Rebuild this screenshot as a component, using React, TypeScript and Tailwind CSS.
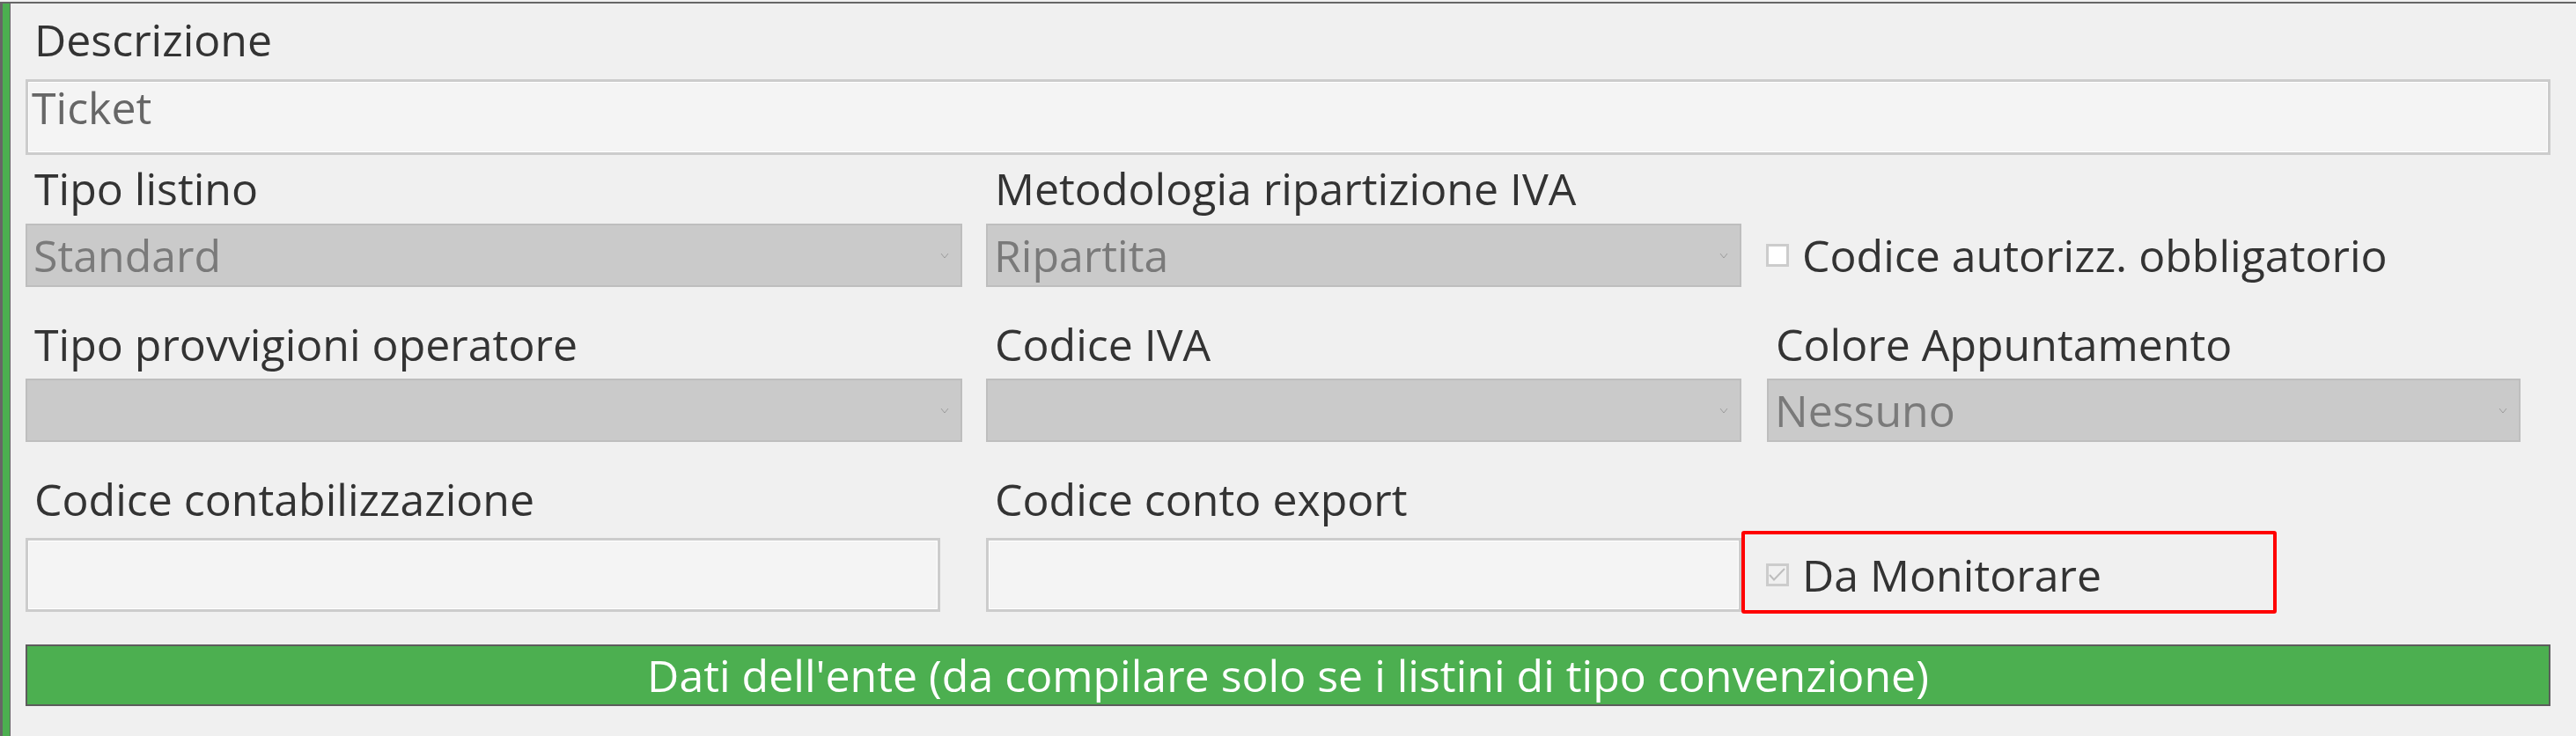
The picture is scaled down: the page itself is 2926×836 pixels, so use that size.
import React from 'react';

const Chevron = () => (
  <svg width="10" height="7" viewBox="0 0 10 7" className="shrink-0">
    <polyline points="1,1 5,6 9,1" fill="none" stroke="#9c9c9c" strokeWidth="1" />
  </svg>
);

const Label = ({ children }: { children?: React.ReactNode }) => (
  <div className="h-[56px] leading-[56px] pl-[10px] text-[#333333] whitespace-nowrap">{children}</div>
);

const Select = ({ value, className = '' }: { value?: string; className?: string }) => (
  <div
    className={`h-[72px] flex items-center justify-between bg-[#cacaca] border-2 border-[#bebebe] pl-[7px] pr-[13px] ${className}`}
  >
    <span className="leading-[56px] text-[#7a7a7a] whitespace-nowrap">{value}</span>
    <Chevron />
  </div>
);

const TextInput = ({ value, className = '' }: { value?: string; className?: string }) => (
  <div
    className={`bg-[#f4f4f4] border-[3px] border-[#cccccc] shadow-[inset_0_0_0_1px_#ffffff] pl-[4px] pt-[1px] ${className}`}
  >
    <span className="block leading-[56px] text-[#666666]">{value}</span>
  </div>
);

const Checkbox = ({ checked }: { checked?: boolean }) => (
  <div
    className={`w-[26px] h-[26px] shrink-0 border-[3px] border-[#cccccc] ${checked ? 'bg-[#f0f0f0]' : 'bg-white'}`}
  >
    {checked && (
      <svg width="20" height="20" viewBox="0 0 20 20">
        <polyline points="1,10 6,15.5 18,3" fill="none" stroke="#bdbdbd" strokeWidth="2" />
      </svg>
    )}
  </div>
);

export default function App() {
  return (
    <div className="w-[2926px] h-[836px] bg-[#f0f0f0] pt-[2px] overflow-hidden font-['Open_Sans',sans-serif] text-[50px]">
      <div className="h-[834px] border-t-2 border-[#666666] flex">
        {/* left edge strip */}
        <div className="w-[3px] bg-[#666666]" />
        <div className="w-[8px] bg-[#4caf50]" />
        <div className="w-[1px] bg-[#666666]" />

        <div className="flex-1 pl-[17px] pr-[29px] pt-[13px]">
          {/* Descrizione */}
          <Label>Descrizione</Label>
          <TextInput value="Ticket" className="mt-[17px] h-[86px]" />

          {/* Row 2 */}
          <div className="flex mt-[10px] gap-[28px]">
            <div className="w-[1064px] flex flex-col gap-[12px]">
              <Label>Tipo listino</Label>
              <Select value="Standard" />
            </div>
            <div className="w-[858px] flex flex-col gap-[12px] -ml-px">
              <Label>Metodologia ripartizione IVA</Label>
              <Select value="Ripartita" />
            </div>
            <div className="w-[856px] flex flex-col gap-[12px] ml-px">
              <div className="h-[56px]" />
              <div className="h-[72px] flex items-center -ml-px">
                <Checkbox />
                <span className="ml-[15px] leading-[56px] text-[#333333] whitespace-nowrap">
                  Codice autorizz. obbligatorio
                </span>
              </div>
            </div>
          </div>

          {/* Row 3 */}
          <div className="flex mt-[37px] gap-[28px]">
            <div className="w-[1064px] flex flex-col gap-[11px]">
              <Label>Tipo provvigioni operatore</Label>
              <Select />
            </div>
            <div className="w-[858px] flex flex-col gap-[11px] -ml-px">
              <Label>Codice IVA</Label>
              <Select />
            </div>
            <div className="w-[856px] flex flex-col gap-[11px] ml-px">
              <Label>Colore Appuntamento</Label>
              <Select value="Nessuno" />
            </div>
          </div>

          {/* Row 4 */}
          <div className="flex mt-[37px] gap-[28px]">
            <div className="w-[1064px] flex flex-col gap-[16px]">
              <Label>Codice contabilizzazione</Label>
              <TextInput className="h-[84px] w-[1039px]" />
            </div>
            <div className="w-[858px] flex flex-col gap-[16px] -ml-px">
              <Label>Codice conto export</Label>
              <TextInput className="h-[84px]" />
            </div>
            <div className="w-[856px] flex flex-col gap-[16px] ml-px">
              <div className="h-[56px]" />
              <div className="relative h-[84px] flex items-center -ml-px">
                <Checkbox checked />
                <span className="ml-[15px] leading-[56px] text-[#333333] whitespace-nowrap">Da Monitorare</span>
                {/* red annotation frame */}
                <div className="absolute left-[-28px] top-[-8px] w-[608px] h-[94px] border-4 border-[#ff0000] rounded-[3px]" />
              </div>
            </div>
          </div>

          {/* Dati dell'ente bar */}
          <div className="mt-[37px] h-[70px] bg-[#4caf50] border-2 border-[#5c5c5c] flex items-center justify-center">
            <span className="leading-[56px] text-white whitespace-nowrap">
              Dati dell'ente (da compilare solo se i listini di tipo convenzione)
            </span>
          </div>
        </div>
      </div>
    </div>
  );
}
